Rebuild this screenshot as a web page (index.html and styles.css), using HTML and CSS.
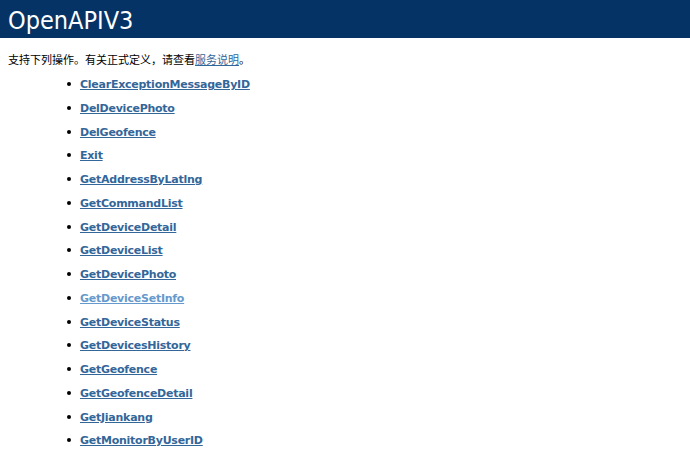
FILE: index.html
```html
<!DOCTYPE html>
<html>
<head>
<meta charset="utf-8">
<link rel="stylesheet" href="styles.css">
</head>
<body>
<div class="heading1">OpenAPIV3</div>
<div class="content">
<p class="intro">支持下列操作。有关正式定义，请查看<a class="svc" href="#">服务说明</a>。</p>
<ul class="ops">
<li><a href="#">ClearExceptionMessageByID</a></li>
<li><a href="#">DelDevicePhoto</a></li>
<li><a href="#">DelGeofence</a></li>
<li><a href="#">Exit</a></li>
<li><a href="#">GetAddressByLatlng</a></li>
<li><a href="#">GetCommandList</a></li>
<li><a href="#">GetDeviceDetail</a></li>
<li><a href="#">GetDeviceList</a></li>
<li><a href="#">GetDevicePhoto</a></li>
<li><a class="visited" href="#">GetDeviceSetInfo</a></li>
<li><a href="#">GetDeviceStatus</a></li>
<li><a href="#">GetDevicesHistory</a></li>
<li><a href="#">GetGeofence</a></li>
<li><a href="#">GetGeofenceDetail</a></li>
<li><a href="#">GetJiankang</a></li>
<li><a href="#">GetMonitorByUserID</a></li>
</ul>
</div>
</body>
</html>
```
FILE: styles.css
```css
html, body {
  margin: 0;
  padding: 0;
  background: #ffffff;
  color: #000000;
  font-family: "DejaVu Sans", Verdana, "Noto Sans CJK SC", sans-serif;
}
.heading1 {
  background: #063366;
  color: #ffffff;
  font-family: "DejaVu Sans Condensed", "DejaVu Sans", Tahoma, sans-serif;
  font-size: 25px;
  height: 38px;
  line-height: 41px;
  padding-left: 8px;
}
.content {
  padding-left: 8px;
  font-size: 11px;
}
.intro {
  margin: 14px 0 0 0;
  line-height: 14px;
  font-family: "Noto Sans CJK SC", sans-serif;
}
.svc {
  color: #336699;
  text-decoration: underline;
}
.ops {
  margin: 12px 0 0 0;
  padding-left: 72px;
  list-style: none;
}
.ops li {
  line-height: 14px;
  margin-bottom: 9.75px;
}
.ops li::before {
  content: "";
  display: inline-block;
  width: 4px;
  height: 4px;
  border-radius: 50%;
  background: #000000;
  margin-left: -13px;
  margin-right: 9px;
  vertical-align: 2px;
}
.ops a {
  color: #336699;
  font-weight: bold;
  text-decoration: underline;
  letter-spacing: -0.25px;
}
.ops a.visited {
  color: #6699cc;
}
```
